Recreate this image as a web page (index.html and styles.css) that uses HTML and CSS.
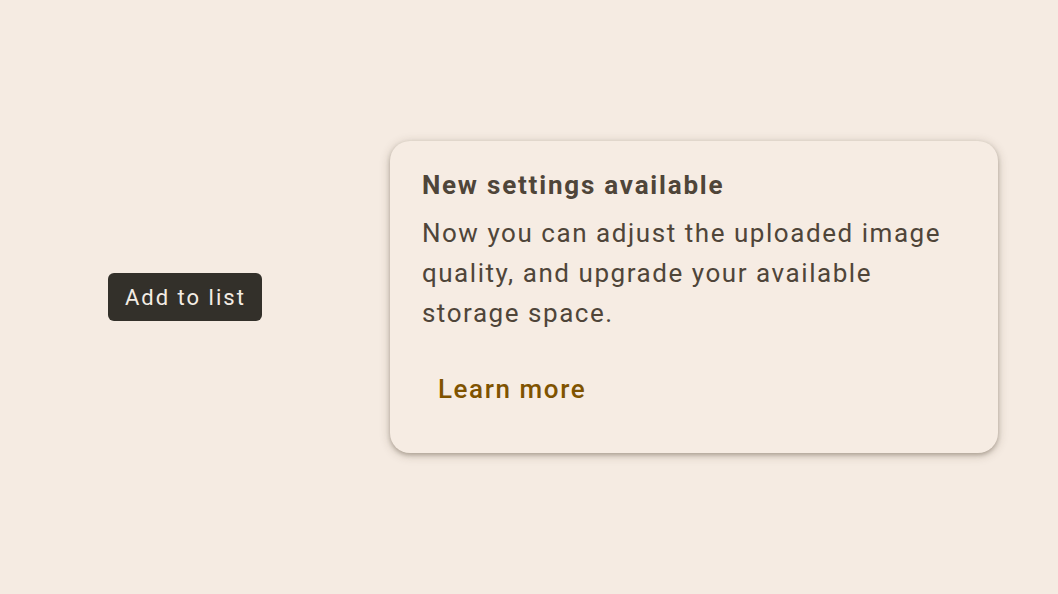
FILE: index.html
```html
<!DOCTYPE html>
<html>
<head>
<meta charset="utf-8">
<link rel="stylesheet" href="styles.css">
</head>
<body>
<main class="stage">
  <div class="plain-tooltip">Add to list</div>
  <div class="rich-tooltip">
    <div class="rich-title">New settings available</div>
    <div class="rich-body">Now you can adjust the uploaded image quality, and upgrade your available storage space.</div>
    <div class="rich-actions">
      <button class="text-button">Learn more</button>
    </div>
  </div>
</main>
</body>
</html>
```
FILE: styles.css
```css
html, body {
  margin: 0;
  padding: 0;
  background: #f5ebe2;
}
body {
  font-family: Roboto, "Noto Sans", sans-serif;
}
.stage {
  height: 594px;
  display: flex;
  align-items: center;
  padding-left: 108px;
  gap: 128px;
}
.plain-tooltip {
  background: #33302a;
  color: #f3ece4;
  border-radius: 6px;
  height: 48px;
  box-sizing: border-box;
  padding: 0 16px 0 17px;
  display: flex;
  align-items: center;
  font-size: 22px;
  letter-spacing: 2px;
  white-space: nowrap;
}
.rich-tooltip {
  width: 608px;
  box-sizing: border-box;
  background: #f6ece3;
  border-radius: 20px;
  padding: 24px 32px 24px 32px;
  box-shadow: 0 2px 4px rgba(60, 45, 30, 0.3), 0 2px 10px 2px rgba(60, 45, 30, 0.15);
  color: #4f4539;
}
.rich-title {
  font-size: 26px;
  line-height: 40px;
  font-weight: 700;
  letter-spacing: 1.8px;
}
.rich-body {
  margin-top: 8px;
  font-size: 26px;
  line-height: 40px;
  letter-spacing: 1.55px;
}
.rich-actions {
  padding-top: 16px;
}
.text-button {
  font-family: inherit;
  background: none;
  border: none;
  height: 80px;
  padding: 0 16px;
  font-size: 26px;
  font-weight: 500;
  letter-spacing: 1.6px;
  color: #7f5300;
  cursor: pointer;
}
```
